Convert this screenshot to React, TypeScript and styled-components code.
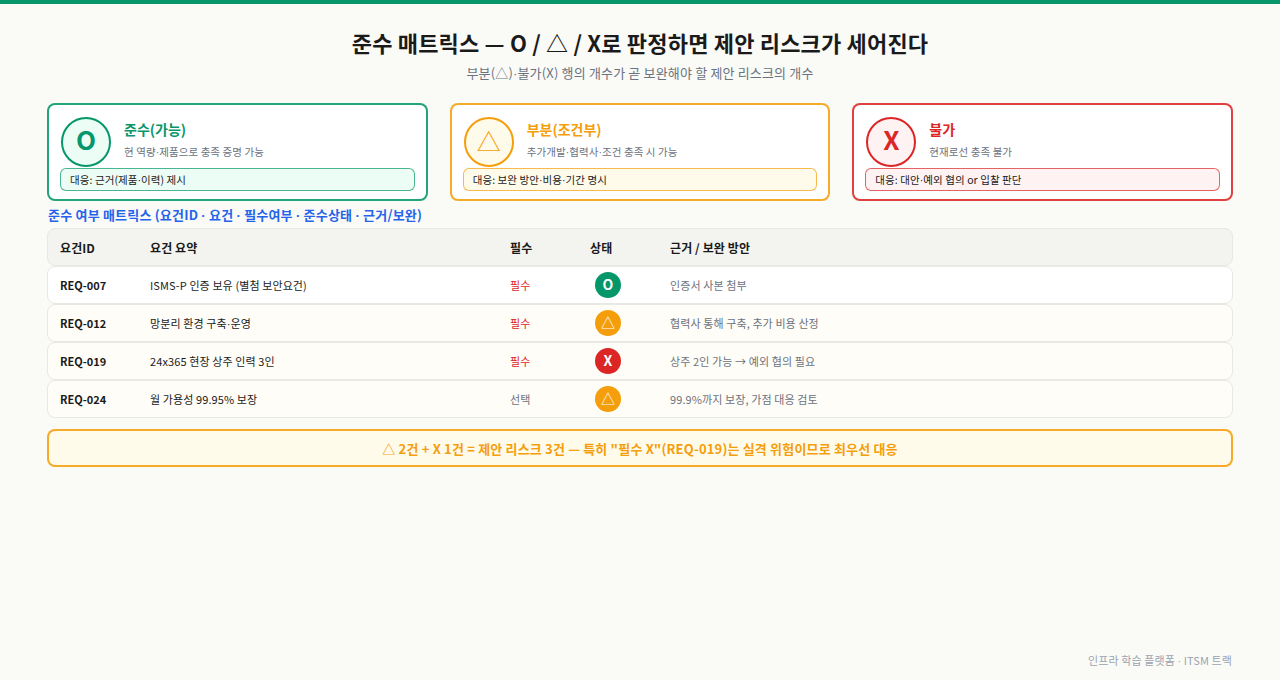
import React from 'react';
import styled, { createGlobalStyle } from 'styled-components';

const COLORS = {
  green: '#059669',
  orange: '#f59e0b',
  red: '#dc2626',
};

const CARDS = [
  {
    id: 'o',
    mark: 'O',
    title: '준수(가능)',
    desc: '현 역량·제품으로 충족 증명 가능',
    note: '대응: 근거(제품·이력) 제시',
    color: COLORS.green,
    tint: '#ecfdf5',
  },
  {
    id: 'tri',
    mark: '△',
    title: '부분(조건부)',
    desc: '추가개발·협력사·조건 충족 시 가능',
    note: '대응: 보완 방안·비용·기간 명시',
    color: COLORS.orange,
    tint: '#fffbeb',
  },
  {
    id: 'x',
    mark: 'X',
    title: '불가',
    desc: '현재로선 충족 불가',
    note: '대응: 대안·예외 협의 or 입찰 판단',
    color: COLORS.red,
    tint: '#fef2f2',
  },
];

const ROWS = [
  { id: 'REQ-007', summary: 'ISMS-P 인증 보유 (별첨 보안요건)', need: '필수', mark: 'O', color: COLORS.green, basis: '인증서 사본 첨부', warm: false },
  { id: 'REQ-012', summary: '망분리 환경 구축·운영', need: '필수', mark: '△', color: COLORS.orange, basis: '협력사 통해 구축, 추가 비용 산정', warm: true },
  { id: 'REQ-019', summary: '24x365 현장 상주 인력 3인', need: '필수', mark: 'X', color: COLORS.red, basis: '상주 2인 가능 → 예외 협의 필요', warm: true },
  { id: 'REQ-024', summary: '월 가용성 99.95% 보장', need: '선택', mark: '△', color: COLORS.orange, basis: '99.9%까지 보장, 가점 대응 검토', warm: true },
];

// the CJK font draws the middle dot too wide, so it gets its own span
function dots(text: string) {
  return text.split('·').map((part, i) => (
    <React.Fragment key={i}>
      {i > 0 && <MidDot>·</MidDot>}
      {part}
    </React.Fragment>
  ));
}

export default function App() {
  return (
    <>
      <GlobalStyle />
      <Page>
        <Header>
          <Title>준수 매트릭스 — O / △ / X로 판정하면 제안 리스크가 세어진다</Title>
          <Subtitle>{dots('부분(△)·불가(X) 행의 개수가 곧 보완해야 할 제안 리스크의 개수')}</Subtitle>
        </Header>
        <CardGrid>
          {CARDS.map((c) => (
            <Card key={c.id} $color={c.color}>
              <CardTop>
                <BigMark $color={c.color} $tint={c.tint} $thin={c.mark === '△'}>
                  {c.mark}
                </BigMark>
                <div>
                  <CardTitle $color={c.color}>{c.title}</CardTitle>
                  <CardDesc>{dots(c.desc)}</CardDesc>
                </div>
              </CardTop>
              <CardNote $color={c.color} $tint={c.tint}>
                {dots(c.note)}
              </CardNote>
            </Card>
          ))}
        </CardGrid>
        <SectionTitle>{dots('준수 여부 매트릭스 (요건ID · 요건 · 필수여부 · 준수상태 · 근거/보완)')}</SectionTitle>
        <Table>
          <HeadRow>
            <span>요건ID</span>
            <span>요건 요약</span>
            <span>필수</span>
            <span>상태</span>
            <span>근거 / 보완 방안</span>
          </HeadRow>
          {ROWS.map((r) => (
            <BodyRow key={r.id} $warm={r.warm}>
              <ReqId>{r.id}</ReqId>
              <Summary>{dots(r.summary)}</Summary>
              <Need $required={r.need === '필수'}>{r.need}</Need>
              <StatusCell>
                <StatusDot $color={r.color} $thin={r.mark === '△'}>
                  {r.mark}
                </StatusDot>
              </StatusCell>
              <Basis>{r.basis}</Basis>
            </BodyRow>
          ))}
        </Table>
        <Callout>△ 2건 + X 1건 = 제안 리스크 3건 — 특히 "필수 X"(REQ-019)는 실격 위험이므로 최우선 대응</Callout>
        <Footer>{dots('인프라 학습 플랫폼 · ITSM 트랙')}</Footer>
      </Page>
    </>
  );
}

const GlobalStyle = createGlobalStyle`
  html, body {
    margin: 0;
    padding: 0;
    background: #fafbf7;
  }
  * {
    box-sizing: border-box;
  }
  body {
    font-family: 'Noto Sans CJK KR', 'Noto Sans', sans-serif;
  }
`;
const MidDot = styled.span`
  font-family: 'Liberation Sans', sans-serif;
`;
const Page = styled.div`
  position: relative;
  width: 1280px;
  height: 680px;
  overflow: hidden;
  display: flex;
  flex-direction: column;
  padding: 0 47px;
  border-top: 4px solid #059669;
  background: #fafbf7;
`;
const Header = styled.header`
  display: flex;
  flex-direction: column;
  align-items: center;
  padding-top: 20px;
`;
const Title = styled.h1`
  margin: 0;
  font-size: 22px;
  line-height: 36px;
  font-weight: 700;
  letter-spacing: 0.18px;
  color: #1a1a1a;
`;
const Subtitle = styled.p`
  margin: 3px 0 0;
  height: 20px;
  font-size: 13px;
  line-height: 20px;
  letter-spacing: 0.17px;
  color: #6b7280;
`;
const CardGrid = styled.div`
  display: grid;
  grid-template-columns: repeat(3, 1fr);
  gap: 22px;
  margin-top: 20px;
`;
const Card = styled.div<{ $color: string }>`
  height: 98px;
  padding: 12px 11px 0;
  border: 2px solid ${(p) => p.$color}e0;
  border-radius: 8px;
  background: #fff;
`;
const CardTop = styled.div`
  display: flex;
  align-items: flex-start;
  gap: 13px;
  margin-left: 1px;
  height: 51px;
`;
const BigMark = styled.div<{ $color: string; $tint: string; $thin: boolean }>`
  flex: none;
  display: flex;
  align-items: center;
  justify-content: center;
  width: 50px;
  height: 50px;
  padding-bottom: ${(p) => (p.$thin ? '4px' : '7px')};
  border: 2px solid ${(p) => p.$color};
  border-radius: 50%;
  background: ${(p) => p.$tint};
  color: ${(p) => p.$color};
  font-size: ${(p) => (p.$thin ? '24px' : '26px')};
  font-weight: ${(p) => (p.$thin ? 400 : 700)};
`;
const CardTitle = styled.div<{ $color: string }>`
  margin-top: 2px;
  font-size: 14px;
  line-height: 20px;
  font-weight: 700;
  color: ${(p) => p.$color};
`;
const CardDesc = styled.div`
  margin-top: 5px;
  height: 16px;
  font-size: 10.5px;
  line-height: 16px;
  letter-spacing: 0.08px;
  color: #6b7280;
`;
const CardNote = styled.div<{ $color: string; $tint: string }>`
  height: 23px;
  padding-left: 9px;
  border: 1px solid ${(p) => p.$color}b3;
  border-radius: 6px;
  background: ${(p) => p.$tint};
  font-size: 10.5px;
  line-height: 21px;
  letter-spacing: 0.08px;
  color: #1a1a1a;
`;
const SectionTitle = styled.h2`
  margin: 4px 1px 0;
  height: 19px;
  font-size: 13px;
  line-height: 19px;
  font-weight: 700;
  letter-spacing: 0.2px;
  color: #2563eb;
`;
const Table = styled.div`
  margin-top: 4px;
  display: flex;
  flex-direction: column;
`;
const RowGrid = styled.div`
  display: grid;
  grid-template-columns: 90px 360px 80px 80px 1fr;
  align-items: center;
  height: 38px;
  padding: 0 12px;
  border: 1px solid #e8e9e3;
  border-radius: 8px;
`;
const HeadRow = styled(RowGrid)`
  background: #f3f4ef;
  font-size: 12px;
  font-weight: 700;
  letter-spacing: 0.1px;
  color: #1a1a1a;
`;
const BodyRow = styled(RowGrid)<{ $warm: boolean }>`
  background: ${(p) => (p.$warm ? '#fffdf7' : '#fff')};
  font-size: 11px;
  letter-spacing: 0.1px;
`;
const ReqId = styled.span`
  font-weight: 700;
  letter-spacing: 0;
  color: #1a1a1a;
`;
const Summary = styled.span`
  color: #1a1a1a;
`;
const Need = styled.span<{ $required: boolean }>`
  color: ${(p) => (p.$required ? '#dc2626' : '#6b7280')};
`;
const StatusCell = styled.div`
  display: flex;
  justify-content: center;
  width: 36px;
`;
const StatusDot = styled.div<{ $color: string; $thin: boolean }>`
  display: flex;
  align-items: center;
  justify-content: center;
  width: 26px;
  height: 26px;
  padding-bottom: ${(p) => (p.$thin ? '3px' : '2px')};
  border-radius: 50%;
  background: ${(p) => p.$color};
  color: #fff;
  font-size: 14px;
  font-weight: ${(p) => (p.$thin ? 400 : 700)};
`;
const Basis = styled.span`
  color: #6b7280;
`;
const Callout = styled.div`
  margin-top: 11px;
  height: 38px;
  display: flex;
  align-items: center;
  justify-content: center;
  border: 2px solid ${COLORS.orange}e0;
  border-radius: 8px;
  background: #fffbeb;
  font-size: 13px;
  font-weight: 700;
  letter-spacing: 0.17px;
  color: #f59e0b;
`;
const Footer = styled.footer`
  position: absolute;
  right: 48px;
  bottom: 11px;
  font-size: 11px;
  line-height: 16px;
  letter-spacing: 0.1px;
  color: #9ca3af;
`;
